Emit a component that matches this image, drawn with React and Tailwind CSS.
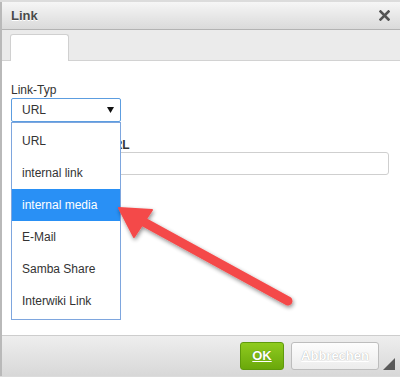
import React from "react";

const items = ["URL", "internal link", "internal media", "E-Mail", "Samba Share", "Interwiki Link"];

export default function App() {
  return (
    <div className="relative w-[400px] h-[377px] overflow-hidden bg-white font-['Liberation_Sans',Arial,sans-serif] text-[#333]">
      <div className="h-[2px] bg-[#dcdcdc]" />
      <div className="flex flex-col border-l-2 border-[#b9b9b9]">
        {/* title bar */}
        <div className="h-[28px] flex items-center justify-between pl-[9px] pr-[10px] bg-gradient-to-b from-[#f6f6f6] to-[#dadada] border-b border-[#b3b3b3]">
          <span className="text-[13px] font-bold text-[#4a4a4a] [text-shadow:0_1px_0_#fff]">Link</span>
          <svg width="11" height="11" viewBox="0 0 11 11">
            <path d="M1.5 1.5 L9.5 9.5 M9.5 1.5 L1.5 9.5" stroke="#555" strokeWidth="2.6" strokeLinecap="square" />
          </svg>
        </div>
        {/* tab bar */}
        <div className="h-[31px] bg-[#ebebeb] border-b border-[#d2d2d2] pl-[8px] pt-[4px] flex items-end">
          <div className="w-[59px] h-[27px] bg-white border border-b-0 border-[#d0d0d0] rounded-t-[3px] -mb-px" />
        </div>
        {/* content */}
        <div className="h-[274px] pl-[9px] pr-[11px] pt-[22px]">
          <div className="text-[12px] leading-[14px]">Link-Typ</div>
          <div className="mt-[1px] w-[110px] h-[24px] border border-[#5c9de0] rounded-[2px] flex items-center justify-between pl-[10px] pr-[6px] text-[12px]">
            <span>URL</span>
            <svg width="7" height="6" viewBox="0 0 7 6">
              <path d="M0 0 L7 0 L3.5 6 Z" fill="#111" />
            </svg>
          </div>
          <div className="flex mt-[16px]">
            <div className="w-[94px]" />
            <div className="flex-1 flex flex-col">
              <div className="text-[12px] font-bold leading-[14px]">URL</div>
              <div className="h-[23px] border border-[#cfcfcf] rounded-[3px] bg-white" />
            </div>
          </div>
        </div>
        {/* footer */}
        <div className="relative h-[41px] border-t border-[#cdcdcd] bg-gradient-to-b from-[#eeeeee] to-[#d8d8d8] flex justify-end items-start pt-[6px] pr-[21px] gap-[7px]">
          <div className="w-[44px] h-[28px] rounded-[3px] border border-[#5f9a0c] bg-gradient-to-b from-[#8fcb1e] to-[#6aa80a] flex items-center justify-center text-[13px] font-bold text-white underline [text-shadow:0_0_1px_#4a7a00]">
            OK
          </div>
          <div className="w-[88px] h-[28px] rounded-[3px] border border-[#bdbdbd] bg-gradient-to-b from-[#fdfdfd] to-[#ececec] flex items-center justify-center text-[13px] font-bold text-white underline [text-shadow:0_0_1px_#9a9a9a]">
            Abbrechen
          </div>
          <svg className="absolute right-[5px] bottom-[6px]" width="12" height="12" viewBox="0 0 12 12">
            <path d="M12 0 L12 12 L0 12 Z" fill="#5a5a5a" />
          </svg>
        </div>
      </div>
      <div className="h-[1px] bg-[#dcdcdc]" />

      {/* dropdown list overlay */}
      <div className="absolute left-[11px] top-[122px] w-[110px] bg-white border border-[#7ea6de] py-[2px]">
        {items.map((t) => (
          <div
            key={t}
            className={
              "h-[32px] flex items-center pl-[10px] text-[12px] " +
              (t === "internal media" ? "bg-[#2990f5] text-white" : "text-[#333]")
            }
          >
            {t}
          </div>
        ))}
      </div>

      {/* annotation arrow */}
      <svg className="absolute left-0 top-0 pointer-events-none" width="400" height="377" viewBox="0 0 400 377">
        <defs>
          <filter id="sh" x="-20%" y="-20%" width="140%" height="140%">
            <feGaussianBlur in="SourceAlpha" stdDeviation="2" />
            <feOffset dx="1" dy="2" result="b" />
            <feComponentTransfer>
              <feFuncA type="linear" slope="0.45" />
            </feComponentTransfer>
            <feMerge>
              <feMergeNode />
              <feMergeNode in="SourceGraphic" />
            </feMerge>
          </filter>
        </defs>
        <g filter="url(#sh)">
          <line x1="142" y1="221" x2="288" y2="301" stroke="#f44a4a" strokeWidth="9" strokeLinecap="round" />
          <path d="M119 208 L152 210 L134 237 Z" fill="#f44a4a" stroke="#f44a4a" strokeWidth="2" strokeLinejoin="round" />
        </g>
      </svg>
    </div>
  );
}
